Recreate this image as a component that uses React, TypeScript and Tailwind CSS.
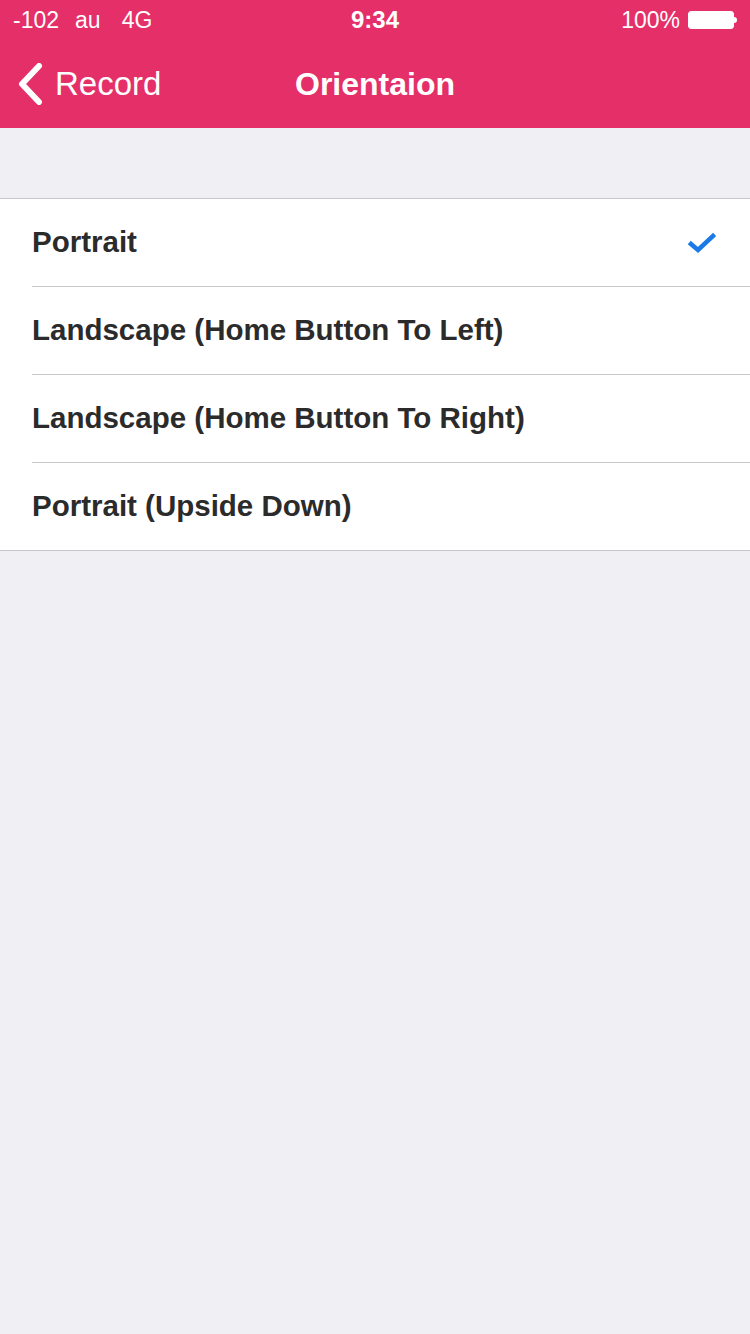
import { useState } from "react";

const options = [
  "Portrait",
  "Landscape (Home Button To Left)",
  "Landscape (Home Button To Right)",
  "Portrait (Upside Down)",
];

function StatusBar() {
  return (
    <div className="relative flex h-10 items-center px-[13px] text-[23px] text-white">
      <span>-102</span>
      <span className="ml-[16px]">au</span>
      <span className="ml-[21px]">4G</span>
      <span className="absolute left-1/2 -translate-x-1/2 text-[24px] font-bold">9:34</span>
      <div className="ml-auto flex items-center gap-[8px]">
        <span>100%</span>
        <div className="flex items-center">
          <div className="h-[18px] w-[46px] rounded-[3px] border border-white bg-white" />
          <div className="h-[6px] w-[3px] rounded-r-sm bg-white" />
        </div>
      </div>
    </div>
  );
}

function NavBar() {
  return (
    <div className="relative flex h-[88px] items-center text-white">
      <button className="flex items-center pl-[17px]">
        <svg width="26" height="42" viewBox="0 0 26 42" fill="none">
          <path d="M22 3 L5 21 L22 39" stroke="white" strokeWidth="6" strokeLinecap="round" strokeLinejoin="round" />
        </svg>
        <span className="ml-[12px] text-[33px]">Record</span>
      </button>
      <div className="absolute left-1/2 -translate-x-1/2 text-[32px] font-bold">Orientaion</div>
    </div>
  );
}

export default function App() {
  const [selected, setSelected] = useState(0);
  return (
    <div className="min-h-[1334px] bg-[#efeff4] font-['Liberation_Sans',Arial,sans-serif]">
      <div className="bg-[#e52f68]">
        <StatusBar />
        <NavBar />
      </div>
      <div className="h-[70px]" />
      <div className="border-y border-[#c8c7cc] bg-white">
        {options.map((label, i) => {
          const last = i === options.length - 1;
          return (
            <div key={label} onClick={() => setSelected(i)} className="pl-[32px]">
              <div
                className={`flex items-center pr-[34px] ${last ? "h-[87px]" : "h-[88px] border-b border-[#c8c7cc]"}`}
              >
                <span className="text-[29.5px] font-bold text-[#2b2b2b]">{label}</span>
                {selected === i && (
                  <svg className="ml-auto" width="28" height="22" viewBox="0 0 28 22" fill="none">
                    <path d="M3 12 L10 18 L25 4" stroke="#1a7ae6" strokeWidth="4.5" strokeLinecap="square" />
                  </svg>
                )}
              </div>
            </div>
          );
        })}
      </div>
    </div>
  );
}
